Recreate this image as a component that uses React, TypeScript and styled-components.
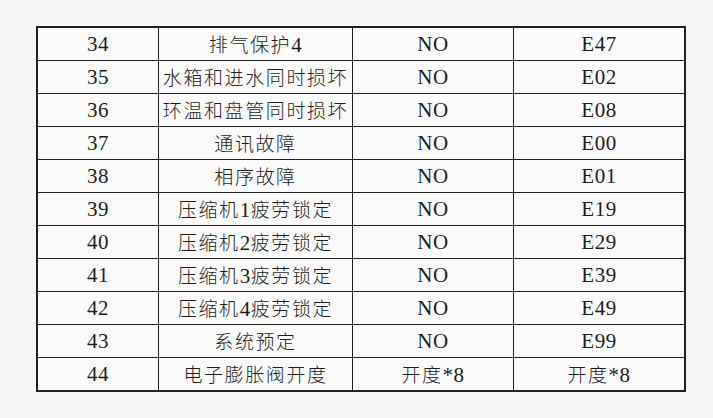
import React from "react";
import styled, { createGlobalStyle } from "styled-components";

const GlobalStyle = createGlobalStyle`
  html, body {
    margin: 0;
    padding: 0;
    background: #f6f6f8;
  }
`;

const Page = styled.div`
  width: 713px;
  height: 418px;
  box-sizing: border-box;
  padding: 26px 0 0 36px;
  background: #f6f6f8;
`;

const Table = styled.table`
  border-collapse: collapse;
  background: #fbfbfc;
  color: #1e1e22;
  font-family: "Liberation Serif", "Noto Sans CJK SC", serif;
  font-size: 21px;
  border: 2px solid #202024;
`;

const Cell = styled.td<{ $w: number }>`
  width: ${({ $w }) => $w}px;
  height: 32px;
  padding: 0;
  text-align: center;
  vertical-align: middle;
  border: 1.5px solid #202024;
  line-height: 28px;
  white-space: nowrap;
  letter-spacing: 0.5px;
`;

const Cjk = styled.span`
  font-family: "Noto Sans CJK SC", sans-serif;
  font-size: 19px;
  font-weight: 300;
  letter-spacing: 1.6px;
`;

const rows: [string, string, string, string][] = [
  ["34", "排气保护4", "NO", "E47"],
  ["35", "水箱和进水同时损坏", "NO", "E02"],
  ["36", "环温和盘管同时损坏", "NO", "E08"],
  ["37", "通讯故障", "NO", "E00"],
  ["38", "相序故障", "NO", "E01"],
  ["39", "压缩机1疲劳锁定", "NO", "E19"],
  ["40", "压缩机2疲劳锁定", "NO", "E29"],
  ["41", "压缩机3疲劳锁定", "NO", "E39"],
  ["42", "压缩机4疲劳锁定", "NO", "E49"],
  ["43", "系统预定", "NO", "E99"],
  ["44", "电子膨胀阀开度", "开度*8", "开度*8"],
];

// split mixed text so CJK runs use the CJK face and digits stay serif
const Mixed: React.FC<{ text: string }> = ({ text }) => {
  const parts = text.match(/[\u4e00-\u9fff]+|[^\u4e00-\u9fff]+/g) || [];
  return (
    <>
      {parts.map((p, i) =>
        /[\u4e00-\u9fff]/.test(p) ? <Cjk key={i}>{p}</Cjk> : <span key={i}>{p}</span>
      )}
    </>
  );
};

const widths = [120, 193, 160, 170];

export default function App() {
  return (
    <>
      <GlobalStyle />
      <Page>
        <Table>
          <tbody>
            {rows.map((r) => (
              <tr key={r[0]}>
                {r.map((c, i) => (
                  <Cell key={i} $w={widths[i]}>
                    <Mixed text={c} />
                  </Cell>
                ))}
              </tr>
            ))}
          </tbody>
        </Table>
      </Page>
    </>
  );
}
